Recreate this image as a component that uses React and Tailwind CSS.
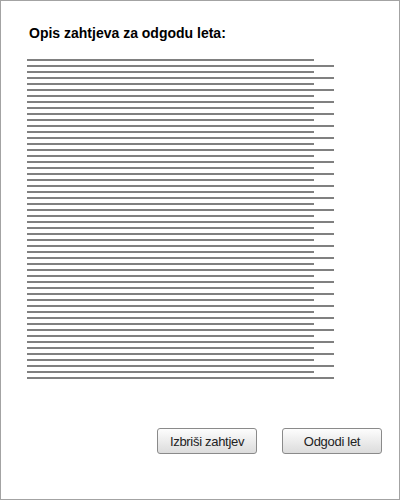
const LINE_COUNT = 54;

function Button({ children }) {
  return (
    <button
      type="button"
      className="w-[100px] h-[26px] rounded-[3px] border border-[#8a8a8a] bg-gradient-to-b from-[#fdfdfd] to-[#dcdcdc] text-[13px] tracking-[-0.3px] text-[#222] leading-none"
    >
      {children}
    </button>
  );
}

export default function App() {
  const lines = Array.from({ length: LINE_COUNT }, (_, i) => i);

  return (
    <div
      className="w-[400px] h-[500px] border border-[#a3a3a3] bg-white flex flex-col"
      style={{ fontFamily: '"Liberation Sans", Arial, sans-serif' }}
    >
      <h1 className="pt-[24px] pl-[28px] text-[14px] font-bold leading-[16px] text-black">
        Opis zahtjeva za odgodu leta:
      </h1>

      {/* tekst zahtjeva */}
      <div className="mt-[18px] ml-[26px] flex flex-col gap-[4px]">
        {lines.map((i) => (
          <div
            key={i}
            className={
              i % 2 === 0
                ? "h-[2px] w-[287px] bg-[#808080]"
                : "h-[2px] w-[307px] bg-[#808080]"
            }
          />
        ))}
      </div>

      <div className="mt-[49px] mr-[17px] flex justify-end gap-[25px]">
        <Button>Izbriši zahtjev</Button>
        <Button>Odgodi let</Button>
      </div>
    </div>
  );
}
